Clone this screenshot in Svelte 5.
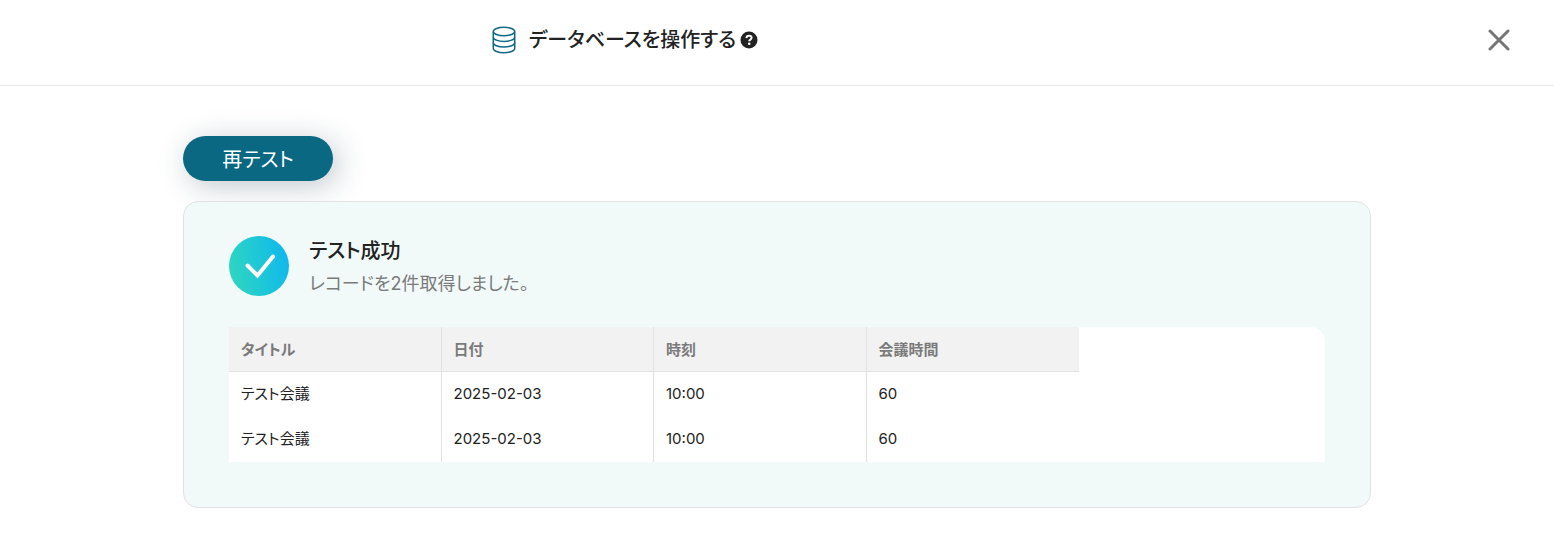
<script lang="ts">
	type Row = string[];

	const columns = ["タイトル", "日付", "時刻", "会議時間"];

	let rows: Row[] = $state([
		["テスト会議", "2025-02-03", "10:00", "60"],
		["テスト会議", "2025-02-03", "10:00", "60"],
	]);
</script>

<header class="header">
	<div class="heading">
		<svg class="db-icon" viewBox="0 0 24 28" aria-hidden="true">
			<ellipse cx="12" cy="5.5" rx="10.7" ry="4.3" />
			<path d="M1.3 5.5v17c0 2.3 4.8 4.2 10.7 4.2s10.7-1.9 10.7-4.2v-17" />
			<path d="M1.3 11.2c0 2.3 4.8 4.2 10.7 4.2s10.7-1.9 10.7-4.2" />
			<path d="M1.3 16.8c0 2.3 4.8 4.2 10.7 4.2s10.7-1.9 10.7-4.2" />
		</svg>
		<h1 class="title">データベースを操作する</h1>
		<button class="help" type="button" aria-label="ヘルプ">
			<svg viewBox="0 0 18 18" aria-hidden="true">
				<circle cx="9" cy="9" r="8.5" fill="#222" />
				<path
					d="M6.4 7.1c.1-1.6 1.2-2.4 2.6-2.4 1.5 0 2.6.8 2.6 2.1 0 1.8-2.4 1.7-2.4 3.4"
					fill="none"
					stroke="#fff"
					stroke-width="2"
				/>
				<circle cx="9.2" cy="12.8" r="1.3" fill="#fff" />
			</svg>
		</button>
	</div>
	<button class="close" type="button" aria-label="閉じる">
		<svg viewBox="0 0 22 22" aria-hidden="true">
			<path d="M2 2l18 18M20 2L2 20" />
		</svg>
	</button>
</header>

<main class="content">
	<button class="retest" type="button">再テスト</button>

	<section class="result">
		<div class="status">
			<svg class="check" viewBox="0 0 60 60" aria-hidden="true">
				<defs>
					<linearGradient id="check-fill" x1="0" y1="0.6" x2="1" y2="0.4">
						<stop offset="0" stop-color="#2ed6c0" />
						<stop offset="1" stop-color="#10b8ee" />
					</linearGradient>
				</defs>
				<circle cx="30" cy="30" r="30" fill="url(#check-fill)" />
				<path d="M18.5 29.5l10 10L44 20.5" />
			</svg>
			<div class="status-text">
				<h2 class="status-title">テスト成功</h2>
				<p class="status-message">レコードを{rows.length}件取得しました。</p>
			</div>
		</div>

		<div class="table-wrap">
			<table>
				<thead>
					<tr>
						{#each columns as column}
							<th scope="col">{column}</th>
						{/each}
					</tr>
				</thead>
				<tbody>
					{#each rows as row}
						<tr>
							{#each row as cell}
								<td>{cell}</td>
							{/each}
						</tr>
					{/each}
				</tbody>
			</table>
		</div>
	</section>
</main>

<style>
	:global(body) {
		background: #fff;
		color: #222;
		font-family: Inter, "Noto Sans CJK JP", sans-serif;
		font-feature-settings: "palt";
	}

	button {
		border: 0;
		padding: 0;
		background: none;
		color: inherit;
		font: inherit;
		font-feature-settings: inherit;
		cursor: pointer;
	}

	svg {
		display: block;
	}

	.header {
		display: grid;
		grid-template-columns: 1fr 304px;
		align-items: center;
		padding: 24px 0 29px;
		border-bottom: 1px solid #e5e5e5;
	}

	.heading {
		display: flex;
		align-items: center;
		justify-content: center;
	}

	.db-icon {
		width: 24px;
		height: 28px;
		margin-right: 13px;
		fill: none;
		stroke: #0b6a84;
		stroke-width: 1.5;
	}

	.title {
		margin: 0;
		font-size: 20px;
		font-weight: 500;
		line-height: 32px;
	}

	.help {
		width: 18px;
		height: 18px;
		margin-left: 4px;
	}

	.close {
		justify-self: end;
		width: 22px;
		height: 22px;
		margin-right: 44px;
	}

	.close path {
		fill: none;
		stroke: #757575;
		stroke-width: 3;
		stroke-linecap: round;
	}

	.content {
		max-width: 1188px;
		margin: 0 auto;
		padding: 50px 20px 29px;
	}

	.retest {
		display: block;
		width: 150px;
		height: 45px;
		padding-top: 2px;
		border-radius: 23px;
		background: #0a6882;
		box-shadow: 5px 5px 30px rgba(34, 58, 80, 0.28);
		color: #fff;
		font-size: 20px;
		line-height: 30px;
	}

	.result {
		margin-top: 20px;
		padding: 34px 45px 45px;
		border: 1px solid #e2e2e2;
		border-radius: 15px;
		background: #f1faf9;
	}

	.status {
		display: flex;
		gap: 20px;
	}

	.check {
		flex: none;
		width: 60px;
		height: 60px;
	}

	.check path {
		fill: none;
		stroke: #fff;
		stroke-width: 4;
		stroke-linecap: round;
	}

	.status-title {
		margin: 0;
		font-size: 20px;
		font-weight: 500;
		line-height: 30px;
	}

	.status-message {
		margin: 4px 0 0;
		color: #7a7a7a;
		font-size: 18px;
		line-height: 27px;
	}

	.table-wrap {
		margin-top: 30px;
		overflow-x: auto;
		border-top-right-radius: 15px;
		background: #fff;
	}

	table {
		width: 850px;
		table-layout: fixed;
		border-spacing: 0;
		font-size: 15px;
		line-height: 21px;
		text-align: left;
	}

	th,
	td {
		box-sizing: border-box;
		height: 45px;
		padding: 0 12px;
		border-right: 1px solid #e2e2e2;
	}

	th {
		border-bottom: 1px solid #e2e2e2;
		background: #f2f2f2;
		color: #7a7a7a;
		font-weight: 600;
	}

	td {
		padding-bottom: 2px;
	}

	th:last-child,
	td:last-child {
		border-right: 0;
	}
</style>
